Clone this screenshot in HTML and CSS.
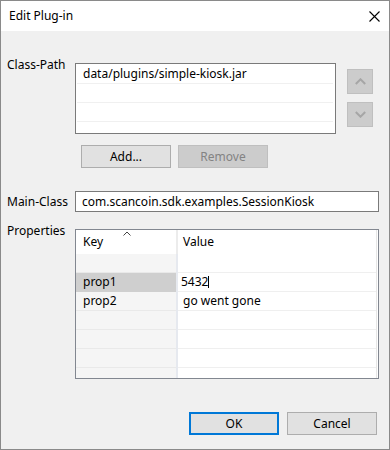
FILE: index.html
```html
<!DOCTYPE html>
<html>
<head>
<meta charset="utf-8">
<link rel="stylesheet" href="styles.css">
</head>
<body>
<div class="window">
  <div class="titlebar">
    <span class="title">Edit Plug-in</span>
    <svg class="close" width="11" height="11" viewBox="0 0 11 11"><path d="M0.5 0.5 L10.5 10.5 M10.5 0.5 L0.5 10.5" stroke="#000" stroke-width="1.1" fill="none"/></svg>
  </div>
  <div class="content">
    <div class="field-row cp-row">
      <div class="label">Class-Path</div>
      <div class="cp-body">
        <div class="cp-top">
          <div class="list">
            <div class="list-row">data/plugins/simple-kiosk.jar</div>
            <div class="list-row"></div>
            <div class="list-row"></div>
            <div class="list-row"></div>
          </div>
          <div class="updown">
            <div class="sbtn"><svg width="11" height="7" viewBox="0 0 11 7"><path d="M0.8 6 L5.5 1.3 L10.2 6" stroke="#a6a6a6" stroke-width="2" fill="none"/></svg></div>
            <div class="sbtn"><svg width="11" height="7" viewBox="0 0 11 7"><path d="M0.8 1 L5.5 5.7 L10.2 1" stroke="#a6a6a6" stroke-width="2" fill="none"/></svg></div>
          </div>
        </div>
        <div class="cp-buttons">
          <div class="btn">Add...</div>
          <div class="btn disabled">Remove</div>
        </div>
      </div>
    </div>
    <div class="field-row main-row">
      <div class="label center">Main-Class</div>
      <div class="textfield">com.scancoin.sdk.examples.SessionKiosk</div>
    </div>
    <div class="field-row props-row">
      <div class="label">Properties</div>
      <div class="table">
        <div class="thead">
          <div class="th key">Key<svg class="sort" width="8" height="5" viewBox="0 0 8 5"><path d="M0.5 4.5 L4 1 L7.5 4.5" stroke="#444" stroke-width="1" fill="none"/></svg></div>
          <div class="th sep"></div>
          <div class="th val">Value</div>
        </div>
        <div class="tbody">
          <div class="tr"><div class="td key"></div><div class="td sep"></div><div class="td val"></div></div>
          <div class="tr"><div class="td key selected">prop1</div><div class="td sep"></div><div class="td val editing">5432<span class="caret"></span></div></div>
          <div class="tr"><div class="td key">prop2</div><div class="td sep"></div><div class="td val">go went gone</div></div>
          <div class="tr"><div class="td key"></div><div class="td sep"></div><div class="td val"></div></div>
          <div class="tr"><div class="td key"></div><div class="td sep"></div><div class="td val"></div></div>
          <div class="tr"><div class="td key"></div><div class="td sep"></div><div class="td val"></div></div>
          <div class="tr"><div class="td key"></div><div class="td sep"></div><div class="td val"></div></div>
        </div>
      </div>
    </div>
    <div class="footer">
      <div class="btn default">OK</div>
      <div class="btn">Cancel</div>
    </div>
  </div>
</div>
</body>
</html>
```

FILE: styles.css
```css
* { box-sizing: border-box; margin: 0; padding: 0; }
html, body { width: 390px; height: 450px; overflow: hidden; }
body {
  font-family: "Noto Sans", "Open Sans", sans-serif;
  font-size: 12px;
  color: #000;
  background: #f0f0f0;
}
.window {
  width: 390px;
  height: 450px;
  border: 1px solid #8a8a8a;
  background: #f0f0f0;
  display: flex;
  flex-direction: column;
}
.titlebar {
  height: 30px;
  flex: none;
  background: #fff;
  display: flex;
  align-items: center;
  justify-content: space-between;
  padding: 0 9px 0 8px;
}
.title { line-height: 30px; }
.close { display: block; }

.content {
  flex: 1;
  display: flex;
  flex-direction: column;
  padding: 32px 10px 0 6px;
}
.field-row {
  display: grid;
  grid-template-columns: 68px 304px;
  align-items: start;
}
.label { line-height: 16px; margin-top: -6px; white-space: nowrap; }
.label.center { margin-top: 0; align-self: center; }

.cp-top { display: flex; align-items: flex-start; }
.list {
  width: 261px;
  height: 71px;
  border: 1px solid #7a7a7a;
  background: #fff;
  padding: 1px 2px 0 1px;
  overflow: hidden;
}
.list-row {
  height: 19px;
  line-height: 18px;
  border-bottom: 1px solid #f0f0f0;
  padding-left: 6px;
  white-space: nowrap;
}
.updown {
  margin-left: 11px;
  margin-top: 6px;
  display: flex;
  flex-direction: column;
  gap: 8px;
}
.sbtn {
  width: 26px;
  height: 25px;
  background: #cccccc;
  border: 1px solid #bfbfbf;
  display: flex;
  align-items: center;
  justify-content: center;
}
.sbtn svg { display: block; }

.cp-buttons {
  display: flex;
  gap: 7px;
  margin: 11px 0 0 6px;
}
.btn {
  width: 90px;
  height: 23px;
  border: 1px solid #adadad;
  background: #e1e1e1;
  display: flex;
  align-items: center;
  justify-content: center;
  line-height: 16px;
}
.btn.disabled {
  background: #cccccc;
  border-color: #bfbfbf;
  color: #838383;
}
.btn.default { border: 2px solid #0078d7; }

.main-row { margin-top: 23px; }
.textfield {
  height: 21px;
  border: 1px solid #7a7a7a;
  background: #fff;
  padding-left: 6px;
  line-height: 19px;
  white-space: nowrap;
}

.props-row { margin-top: 17px; }
.table {
  height: 150px;
  border: 1px solid #828790;
  background: #fff;
  overflow: hidden;
}
.thead, .tr {
  display: grid;
  grid-template-columns: 100px 2px 198px;
  width: 301px;
  border-right: 1px solid #e6e6e6;
}
.thead { height: 24px; }
.th { line-height: 24px; position: relative; background: #fff; }
.th.key { padding-left: 7px; }
.th.val { padding-left: 5px; }
.th.sep, .td.sep { background: #e6e9ef; }
.th.sep { background: #ececec; }
.sort { position: absolute; left: 47px; top: 1px; display: block; }
.tr { height: 19px; }
.td {
  line-height: 18px;
  border-bottom: 1px solid #efefef;
  white-space: nowrap;
}
.td.key { background: #f5f5f5; border-bottom-color: #e9e9e9; padding-left: 7px; }
.td.key.selected { background: #cfcfcf; border-bottom-color: #cfcfcf; }
.td.val { background: #fff; padding-left: 5px; }
.td.sep { border-bottom: none; }
.td.val.editing { padding-left: 3px; }
.caret {
  display: inline-block;
  width: 1px;
  height: 12px;
  background: #000;
  vertical-align: -2px;
}

.footer {
  margin-top: 33px;
  display: flex;
  justify-content: flex-end;
  gap: 8px;
  padding-right: 2px;
}
```
